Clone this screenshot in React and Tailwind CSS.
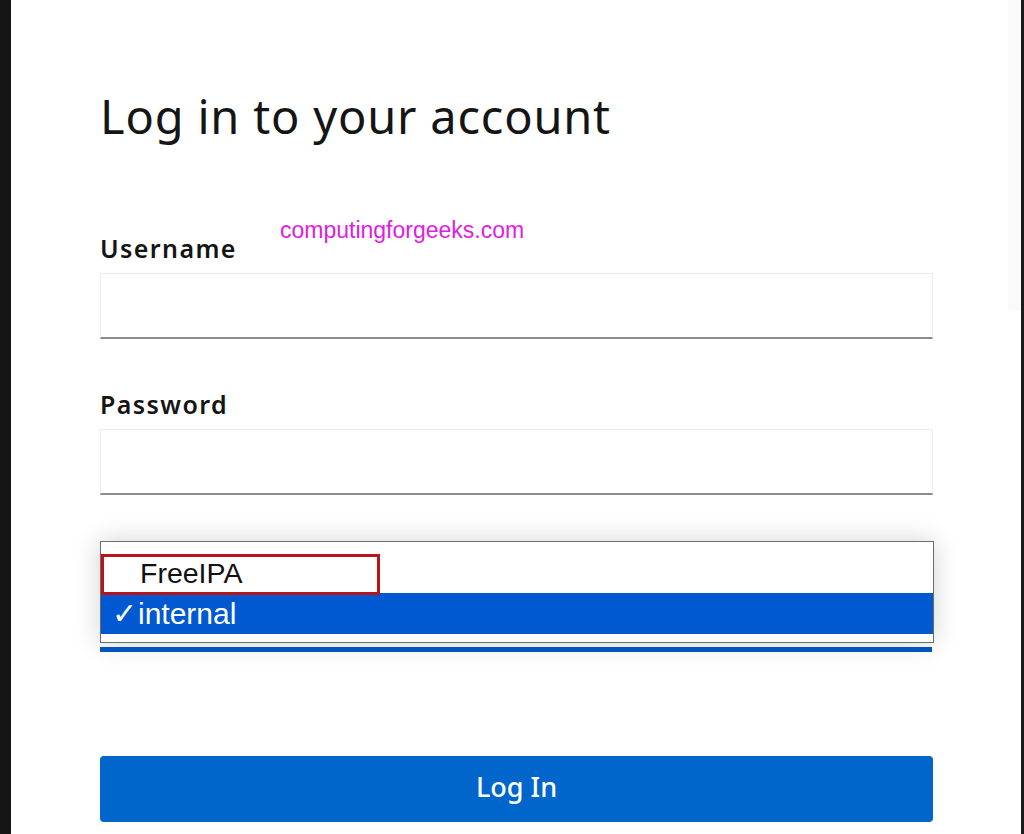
import React from "react";

export default function App() {
  const font = { fontFamily: '"Noto Sans", "Open Sans", sans-serif' };
  return (
    <div className="flex h-[834px] w-[1024px] overflow-hidden bg-white" style={font}>
      <div className="w-[11px] shrink-0 bg-[#151515]" />
      <div className="relative flex-1 bg-white">
        <div className="pointer-events-none absolute right-0 top-0 h-[310px] w-[13px] bg-[#fafafa]" />
        <div className="relative ml-[89px] w-[833px] pt-[84px]">
          <h1 className="text-[47px] font-normal leading-[64px] tracking-[0.8px] text-[#151515]">
            Log in to your account
          </h1>
          <div className="relative mt-[84px]">
            <div className="text-[25px] font-semibold leading-[32px] tracking-[1.4px] text-[#151515]">Username</div>
            <div
              className="absolute left-[180px] top-[-16px] text-[23px] leading-[28px] text-[#e020e0]"
              style={{ fontFamily: '"Liberation Sans", Arial, sans-serif' }}
            >
              computingforgeeks.com
            </div>
          </div>
          <div className="mt-[9px] h-[66px] w-full border border-[#ededed] border-b-2 border-b-[#8a8d90] bg-white" />
          <div className="mt-[49px] text-[25px] font-semibold leading-[32px] tracking-[1.4px] text-[#151515]">Password</div>
          <div className="mt-[9px] h-[66px] w-full border border-[#ededed] border-b-2 border-b-[#8a8d90] bg-white" />
          <div className="relative mt-[46px] h-[112px]">
            <div className="absolute left-0 top-[106px] h-[5px] w-[832px] bg-[#0058c8]" />
            <div
              className="absolute left-0 top-0 w-[834px] border border-[#6b6b6b] bg-white pb-[8px] pt-[11px] shadow-[0_0_24px_rgba(0,0,0,0.18)]"
              style={{ fontFamily: '"Liberation Sans", Arial, sans-serif' }}
            >
              <div className="relative h-[40px]">
                <div className="absolute left-0 top-[1px] h-[41px] w-[279px] border-[3px] border-[#b8141a] bg-white" />
                <div className="relative pl-[39px] text-[28.5px] leading-[40px] text-[#111]">FreeIPA</div>
              </div>
              <div className="flex h-[41px] items-center bg-[#0059d1] pl-[11px] text-[30px] leading-[40px] text-white">
                <span className="mr-[1px] text-[30px]">✓</span>
                <span>internal</span>
              </div>
            </div>
          </div>
          <button className="mt-[103px] flex h-[66px] w-full items-center justify-center rounded-[4px] bg-[#0066cc] pb-[4px] text-[27px] font-medium text-white">
            Log In
          </button>
        </div>
      </div>
      <div className="w-[3px] shrink-0 bg-[#1b1b1b]" />
    </div>
  );
}
